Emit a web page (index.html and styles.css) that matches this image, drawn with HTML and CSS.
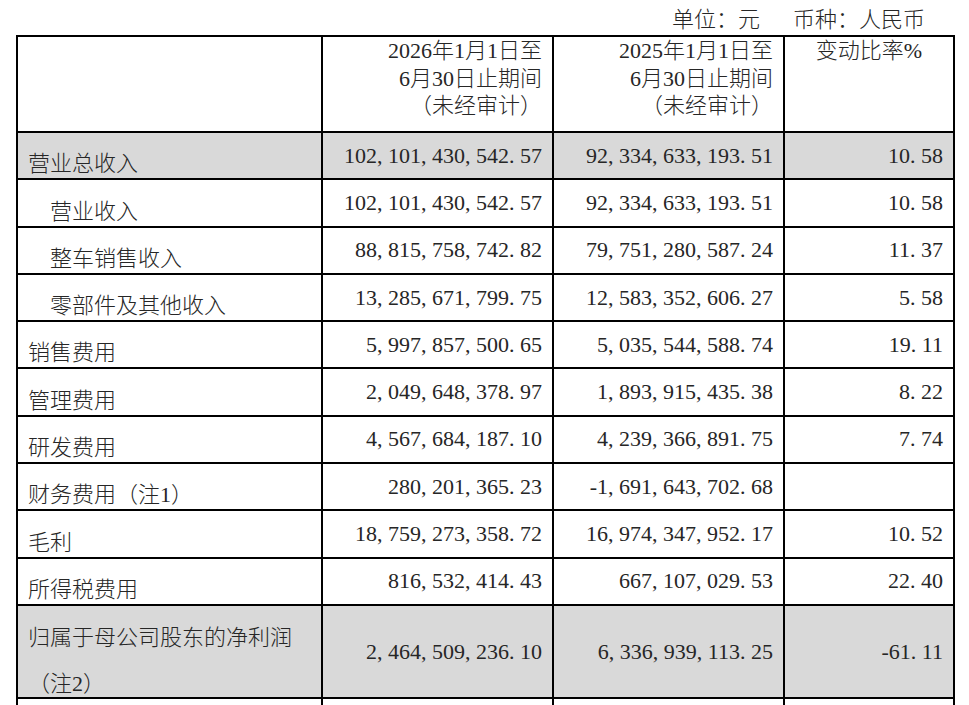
FILE: index.html
```html
<!DOCTYPE html>
<html lang="zh-CN">
<head>
<meta charset="utf-8">
<title>主要财务数据</title>
<link rel="stylesheet" href="styles.css">
</head>
<body>
<div class="page">
  <div class="unit"><span>单位：元</span><span class="cur">币种：人民币</span></div>
  <table class="report">
    <colgroup>
      <col class="c1"><col class="c2"><col class="c3"><col class="c4">
    </colgroup>
    <tr class="head">
      <td></td>
      <td class="hd">2026年1月1日至<br>6月30日止期间<br>（未经审计）</td>
      <td class="hd">2025年1月1日至<br>6月30日止期间<br>（未经审计）</td>
      <td class="hd ctr">变动比率%</td>
    </tr>
    <tr class="shade">
      <td class="lbl">营业总收入</td>
      <td class="num">102<i>,</i>101<i>,</i>430<i>,</i>542<i>.</i>57</td>
      <td class="num">92<i>,</i>334<i>,</i>633<i>,</i>193<i>.</i>51</td>
      <td class="num">10<i>.</i>58</td>
    </tr>
    <tr>
      <td class="lbl sub">营业收入</td>
      <td class="num">102<i>,</i>101<i>,</i>430<i>,</i>542<i>.</i>57</td>
      <td class="num">92<i>,</i>334<i>,</i>633<i>,</i>193<i>.</i>51</td>
      <td class="num">10<i>.</i>58</td>
    </tr>
    <tr>
      <td class="lbl sub">整车销售收入</td>
      <td class="num">88<i>,</i>815<i>,</i>758<i>,</i>742<i>.</i>82</td>
      <td class="num">79<i>,</i>751<i>,</i>280<i>,</i>587<i>.</i>24</td>
      <td class="num">11<i>.</i>37</td>
    </tr>
    <tr>
      <td class="lbl sub">零部件及其他收入</td>
      <td class="num">13<i>,</i>285<i>,</i>671<i>,</i>799<i>.</i>75</td>
      <td class="num">12<i>,</i>583<i>,</i>352<i>,</i>606<i>.</i>27</td>
      <td class="num">5<i>.</i>58</td>
    </tr>
    <tr>
      <td class="lbl">销售费用</td>
      <td class="num">5<i>,</i>997<i>,</i>857<i>,</i>500<i>.</i>65</td>
      <td class="num">5<i>,</i>035<i>,</i>544<i>,</i>588<i>.</i>74</td>
      <td class="num">19<i>.</i>11</td>
    </tr>
    <tr>
      <td class="lbl">管理费用</td>
      <td class="num">2<i>,</i>049<i>,</i>648<i>,</i>378<i>.</i>97</td>
      <td class="num">1<i>,</i>893<i>,</i>915<i>,</i>435<i>.</i>38</td>
      <td class="num">8<i>.</i>22</td>
    </tr>
    <tr>
      <td class="lbl">研发费用</td>
      <td class="num">4<i>,</i>567<i>,</i>684<i>,</i>187<i>.</i>10</td>
      <td class="num">4<i>,</i>239<i>,</i>366<i>,</i>891<i>.</i>75</td>
      <td class="num">7<i>.</i>74</td>
    </tr>
    <tr>
      <td class="lbl">财务费用（注1）</td>
      <td class="num">280<i>,</i>201<i>,</i>365<i>.</i>23</td>
      <td class="num"><i class="m">-</i>1<i>,</i>691<i>,</i>643<i>,</i>702<i>.</i>68</td>
      <td class="num"></td>
    </tr>
    <tr>
      <td class="lbl">毛利</td>
      <td class="num">18<i>,</i>759<i>,</i>273<i>,</i>358<i>.</i>72</td>
      <td class="num">16<i>,</i>974<i>,</i>347<i>,</i>952<i>.</i>17</td>
      <td class="num">10<i>.</i>52</td>
    </tr>
    <tr>
      <td class="lbl">所得税费用</td>
      <td class="num">816<i>,</i>532<i>,</i>414<i>.</i>43</td>
      <td class="num">667<i>,</i>107<i>,</i>029<i>.</i>53</td>
      <td class="num">22<i>.</i>40</td>
    </tr>
    <tr class="shade tall">
      <td class="lbl2"><span class="l1">归属于母公司股东的净利润</span><span class="l2">（注2）</span></td>
      <td class="num">2<i>,</i>464<i>,</i>509<i>,</i>236<i>.</i>10</td>
      <td class="num">6<i>,</i>336<i>,</i>939<i>,</i>113<i>.</i>25</td>
      <td class="num"><i class="m">-</i>61<i>.</i>11</td>
    </tr>
    <tr>
      <td class="lbl"></td>
      <td class="num"></td>
      <td class="num"></td>
      <td class="num"></td>
    </tr>
  </table>
</div>
</body>
</html>
```

FILE: styles.css
```css
* {
  box-sizing: border-box;
}

body {
  margin: 0;
  background: #ffffff;
  color: #262626;
  font-family: "Liberation Serif", "Noto Sans CJK SC", serif;
  font-size: 22px;
  font-weight: 400;
}

.page {
  width: 969px;
  padding-left: 16px;
}

.unit {
  width: 937px;
  height: 35px;
  padding: 5px 28px 0 0;
  line-height: 30px;
  text-align: right;
  font-weight: 300;
}

.unit .cur {
  margin-left: 33px;
}

.report {
  border-collapse: collapse;
  table-layout: fixed;
  width: 937px;
}

.c1 { width: 305px; }
.c2 { width: 231px; }
.c3 { width: 231px; }
.c4 { width: 170px; }

.report td {
  border: 2px solid #000;
  padding: 0 10px;
  white-space: nowrap;
}

.report tr {
  height: 47.3px;
}

.report tr.head {
  height: 96px;
}

.report tr.tall {
  height: 93.4px;
}

.shade td {
  background: #d9d9d9;
}

.hd {
  vertical-align: top;
  text-align: right;
  line-height: 27.5px;
  padding-top: 2px;
  font-weight: 300;
}

.hd.ctr {
  text-align: center;
}

.lbl {
  vertical-align: bottom;
  line-height: 28px;
  font-weight: 300;
}

.lbl.sub {
  padding-left: 32px;
}

.lbl2 {
  vertical-align: top;
  font-weight: 300;
}

.lbl2 .l1 {
  display: block;
  line-height: 64px;
}

.lbl2 .l2 {
  display: block;
  line-height: 27px;
}

.num {
  vertical-align: middle;
  text-align: right;
  line-height: 28px;
}

.num i {
  display: inline-block;
  width: 0.5em;
  font-style: normal;
  text-align: left;
}

.num i.m {
  text-align: right;
}
```
